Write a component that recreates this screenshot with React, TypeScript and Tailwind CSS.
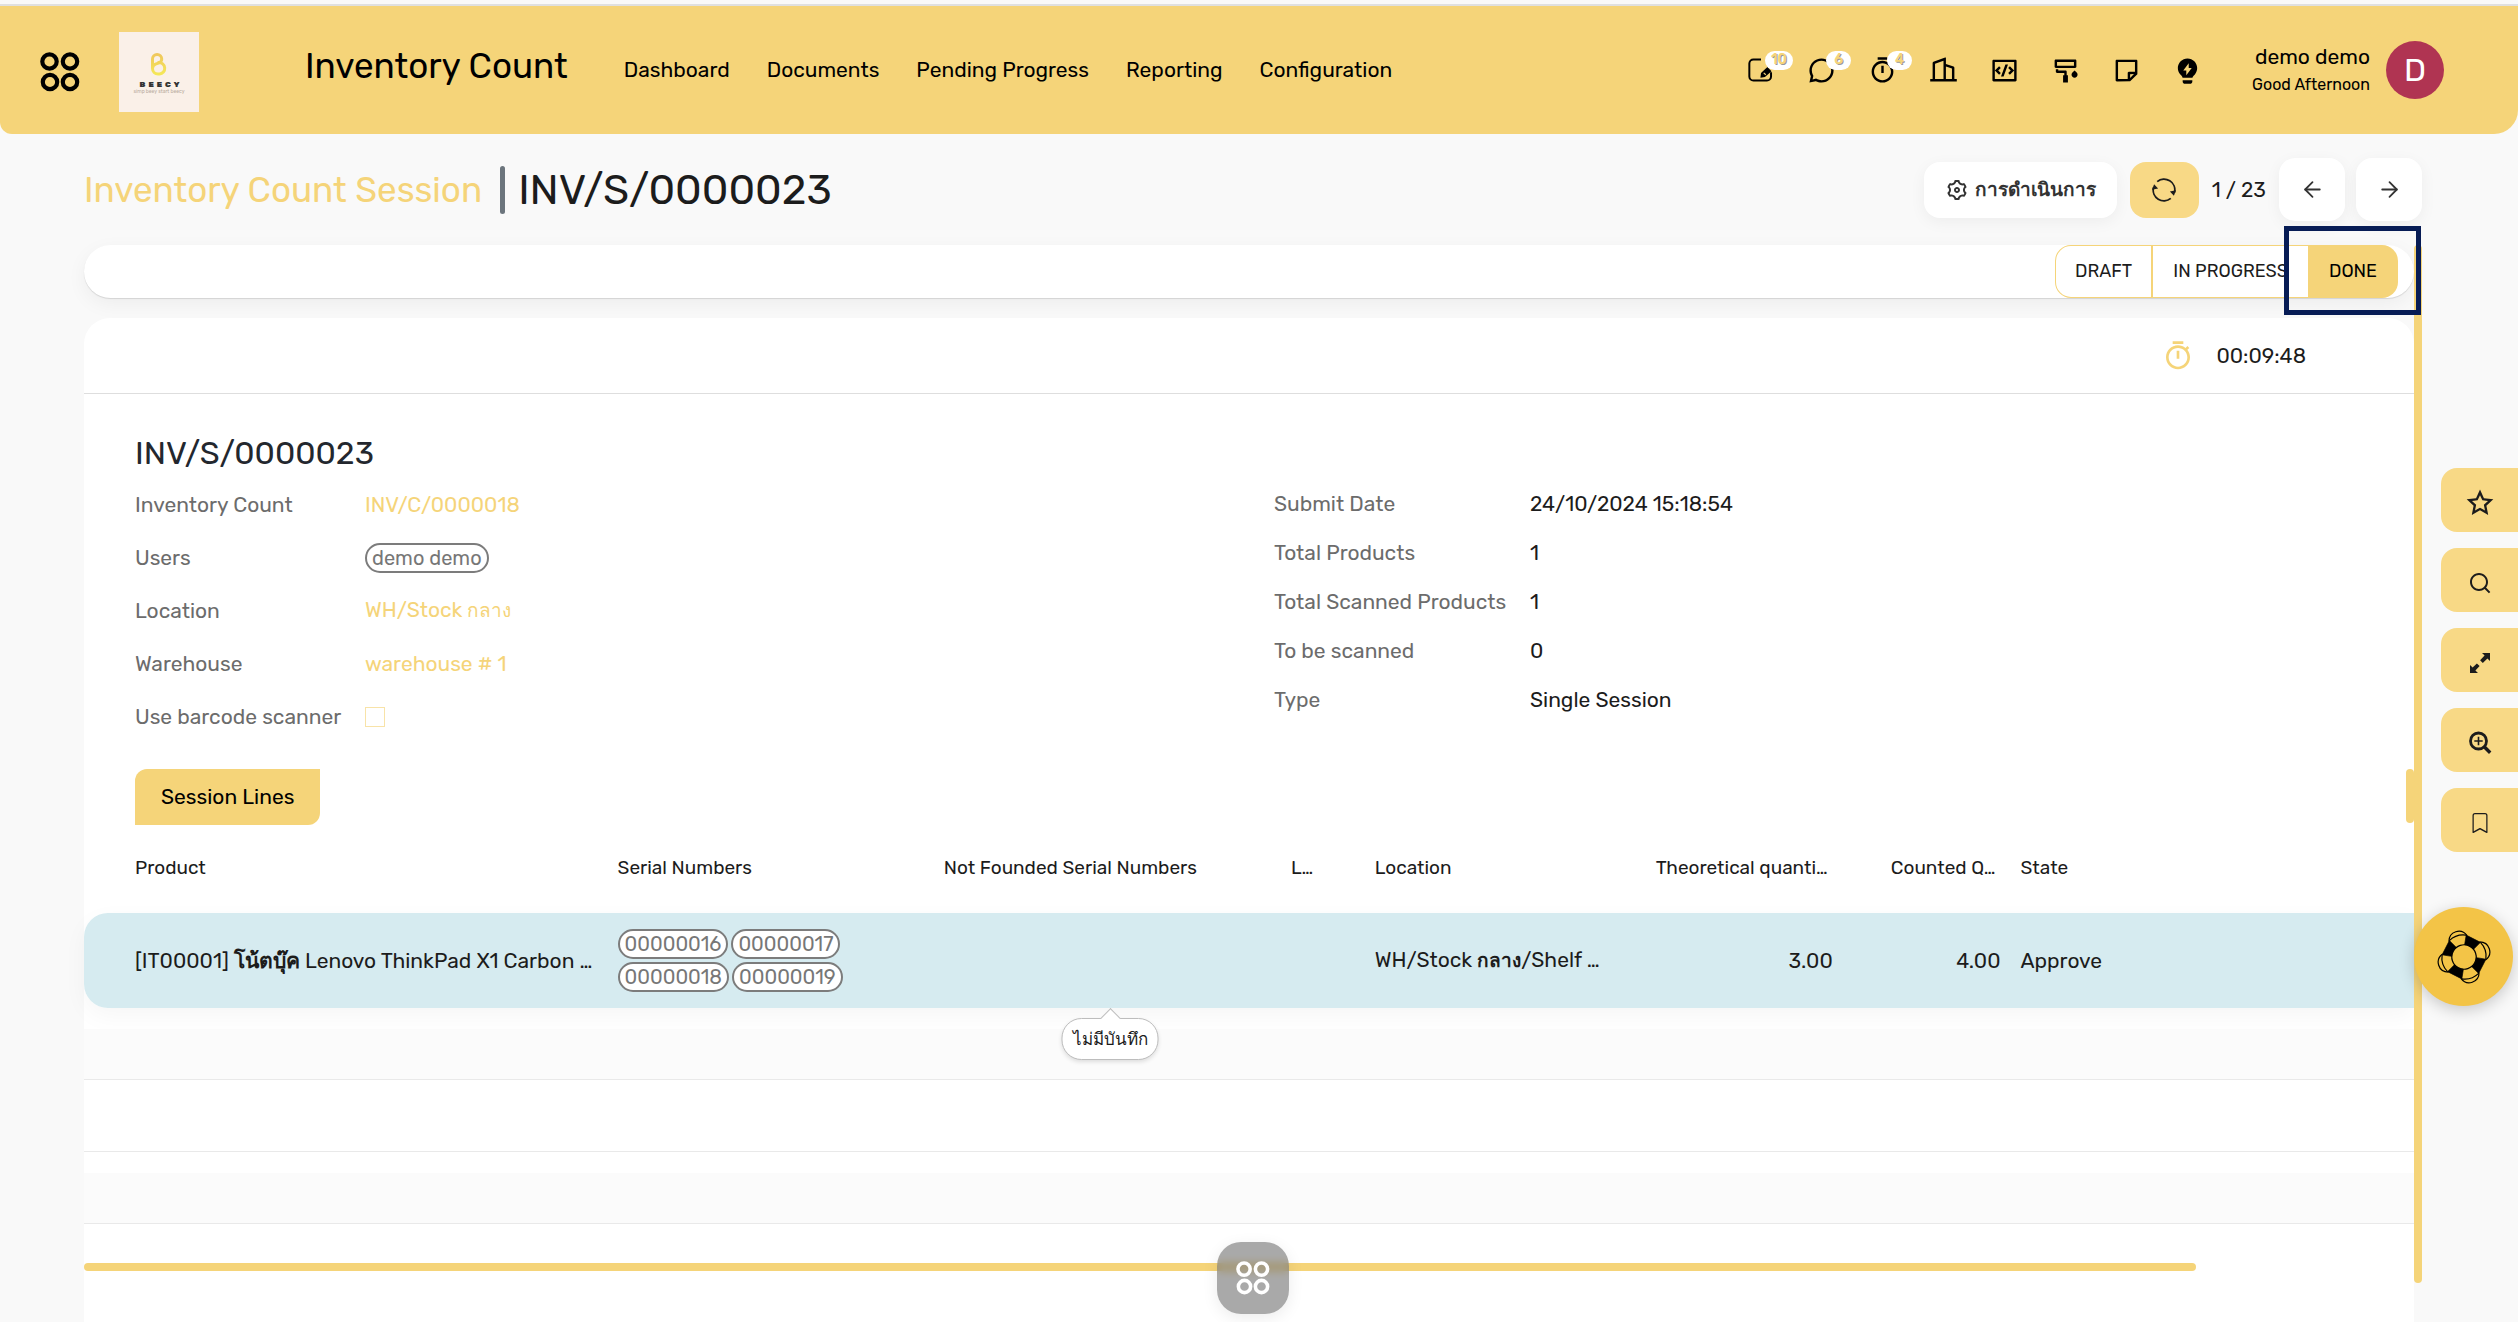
import type { ReactNode } from "react";
import {
  RiBuilding2Line,
  RiChat3Line,
  RiCodeBoxLine,
  RiLightbulbFlashFill,
  RiPaintBrushLine,
  RiSearchLine,
  RiSettings3Line,
  RiStarLine,
  RiStickyNoteLine,
  RiTimerLine,
} from "react-icons/ri";
import { BsBookmark } from "react-icons/bs";
import { ArrowLeft, ArrowRight } from "lucide-react";

const navItems = ["Dashboard", "Documents", "Pending Progress", "Reporting", "Configuration"];

function FourCircles({ className }: { className: string }) {
  return (
    <svg viewBox="0 0 40 40" className={className} fill="none" stroke="currentColor" strokeWidth="4.2" aria-hidden="true">
      <circle cx="9.5" cy="9.5" r="7.2" />
      <circle cx="30" cy="9.5" r="7.2" />
      <circle cx="10" cy="30" r="7.2" />
      <circle cx="30" cy="30" r="7.2" />
    </svg>
  );
}

function BeecyLogo() {
  return (
    <div className="flex size-20 flex-col items-center bg-[#faf0e8] pt-5">
      <svg viewBox="0 0 18 24" className="h-6 w-[18px]" fill="none" aria-hidden="true">
        <defs>
          <linearGradient id="bee" x1="0" y1="0" x2="0" y2="24" gradientUnits="userSpaceOnUse">
            <stop offset="0" stopColor="#efc45c" />
            <stop offset="1" stopColor="#f5ea58" />
          </linearGradient>
        </defs>
        <path
          d="M2.500 16.500V7a4.600 4.600 0 0 1 9.200 0q0 2.600-2.600 3.800L5.500 12.200M8.500 10.600a5.700 5.700 0 0 1 1 11.400H8A5.500 5.500 0 0 1 2.500 16.500q0-3 3-4.300"
          stroke="url(#bee)"
          strokeWidth="3"
          strokeLinecap="round"
          strokeLinejoin="round"
        />
      </svg>
      <span className="mt-1 pl-1 text-[8px] leading-[9px] font-black tracking-[3px] text-[#333]">BEECY</span>
      <span className="text-[5px] leading-[5px] text-[#b9ab9e]">simp beey start beecy</span>
    </div>
  );
}

function EditSquare() {
  return (
    <svg viewBox="0 0 24 24" className="size-7" aria-hidden="true">
      <path
        d="M12 2.900H5.500A3.500 3.500 0 0 0 2 6.400v11.100A3.500 3.500 0 0 0 5.500 21h11.600a3.500 3.500 0 0 0 3.500-3.500V14"
        fill="none"
        stroke="currentColor"
        strokeWidth="1.700"
      />
      <path d="M17.500 9.500l3.500 3.500-5.600 5-3.900.6.500-4z" fill="currentColor" />
      <path d="M14.300 14.500l1.800 1.600" stroke="#f5d479" strokeWidth="1" />
    </svg>
  );
}

function RefreshIcon() {
  return (
    <svg viewBox="0 0 24 24" className="size-6" fill="none" stroke="currentColor" strokeWidth="1.800" aria-hidden="true">
      <path d="M5.200 3.600A10.800 10.800 0 0 1 22.500 14.500" />
      <path d="M18.800 20.400A10.800 10.800 0 0 1 1.500 9.500" />
      <path d="M24 12.200l-2.100 5.600-4-4.400zM0 11.800l2.100-5.600 4 4.400z" fill="currentColor" stroke="none" />
    </svg>
  );
}

function ExpandIcon() {
  return (
    <svg viewBox="0 0 22 22" className="size-[22px]" fill="currentColor" aria-hidden="true">
      <path d="M13 1h8v8l-2.600-2.600-4.600 4.500-2.700-2.700 4.500-4.600zM9 21H1v-8l2.600 2.600 4.300-4.200 2.700 2.700-4.200 4.300z" />
    </svg>
  );
}

function ZoomIcon() {
  return (
    <svg viewBox="0 0 24 24" className="size-6" fill="none" stroke="currentColor" aria-hidden="true">
      <circle cx="10.500" cy="10" r="8" strokeWidth="2.800" />
      <path d="M16.500 16l5.700 5.700" strokeWidth="3.400" />
      <path d="M10.500 5.800v8.400M6.300 10h8.400" strokeWidth="1.600" />
    </svg>
  );
}

function LifeRing() {
  return (
    <svg viewBox="-28 -28 56 56" className="size-14" fill="none" stroke="#000" aria-hidden="true">
      <g transform="rotate(27)">
        {[0, 90, 180, 270].map((a) => (
          <g key={a} transform={`rotate(${a})`}>
            <path d="M-8-20.500L8-20.500 5-11.200A12.200 12.200 0 0 0-5-11.200Z" fill="#000" strokeWidth=".6" />
            <path d="M8-20.500A20 20 0 0 1 20.500-8" strokeWidth="1.200" />
            <path d="M7-20.500C16-25 25-16 20.500-7" strokeWidth="1.200" />
          </g>
        ))}
        <circle r="12.200" strokeWidth="1.200" />
      </g>
    </svg>
  );
}

function IconButton({ label, badge, children }: { label: string; badge?: string; children: ReactNode }) {
  return (
    <button type="button" aria-label={label} className="relative grid size-[29px] place-items-center">
      {children}
      {badge && (
        <span className="absolute -top-[5px] left-[19px] grid h-[19px] min-w-[25px] place-items-center rounded-full bg-white px-[6px] text-[14px] leading-none font-medium text-[#f5d479] [text-shadow:1px_1px_0_#999]">
          {badge}
        </span>
      )}
    </button>
  );
}

function Tag({ children }: { children: ReactNode }) {
  return (
    <span className="inline-flex h-[30px] items-center rounded-full border-2 border-[#7c7c7c] bg-white px-[5px] text-[20px] leading-none text-[#777]">
      {children}
    </span>
  );
}

function Field({ label, labelWidth, className, children }: { label: string; labelWidth: string; className: string; children: ReactNode }) {
  return (
    <div className={`flex items-center ${className}`}>
      <dt className={`${labelWidth} shrink-0 text-[#6c6c6c]`}>{label}</dt>
      <dd>{children}</dd>
    </div>
  );
}

function StripeRow({ filled }: { filled: boolean }) {
  return (
    <tr className="border-b border-[#e9e9e9]">
      <td colSpan={8} className="h-[71px] p-0">
        <div className={filled ? "mt-[21px] h-[50px] bg-[#fbfbfb]" : "h-[71px]"} />
      </td>
    </tr>
  );
}

const linkClass = "text-[#f5d479]";
const sideClass = "grid h-16 w-[77px] place-items-center rounded-l-2xl bg-[#f8d986] pt-[6px]";

export default function App() {
  return (
    <div className="flex min-h-screen flex-col bg-[#f9f9f9] font-['Rubik','Inter','Noto_Sans',sans-serif] text-[21px] leading-6 text-[#1c1c1c]">
      <div className="h-[6px] border-b-2 border-[#e0e0e0]" />
      <header className="flex h-32 items-center rounded-bl-xl rounded-br-3xl bg-[#f5d479] pr-[74px] pl-10 text-black">
        <div className="flex shrink-0 items-center gap-[39px] pt-1">
          <button type="button" aria-label="Apps">
            <FourCircles className="size-10" />
          </button>
          <BeecyLogo />
        </div>
        <h1 className="mr-14 ml-[106px] pb-2 text-[35px] leading-10 whitespace-nowrap">Inventory Count</h1>
        <nav className="flex gap-[37px] whitespace-nowrap">
          {navItems.map((item) => (
            <a key={item} href="#">{item}</a>
          ))}
        </nav>
        <div className="ml-auto flex items-center gap-8">
          <IconButton label="Edit" badge="10"><EditSquare /></IconButton>
          <IconButton label="Messages" badge="6"><RiChat3Line size={29} /></IconButton>
          <IconButton label="Activities" badge="4"><RiTimerLine size={29} /></IconButton>
          <IconButton label="Company"><RiBuilding2Line size={29} /></IconButton>
          <IconButton label="Developer"><RiCodeBoxLine size={29} /></IconButton>
          <IconButton label="Theme"><RiPaintBrushLine size={29} /></IconButton>
          <IconButton label="Notes"><RiStickyNoteLine size={29} /></IconButton>
          <IconButton label="Tips"><RiLightbulbFlashFill size={29} /></IconButton>
        </div>
        <div className="ml-[50px] pt-[2px] text-right whitespace-nowrap">
          <div className="leading-7">demo demo</div>
          <div className="text-[16px] leading-7">Good Afternoon</div>
        </div>
        <div className="ml-4 grid size-[58px] shrink-0 place-items-center rounded-full bg-[#b03452] text-[32px] text-white">D</div>
      </header>

      <div className="flex flex-1">
        <main className="relative ml-[84px] flex min-w-0 flex-1 flex-col">
          <div className="flex h-[111px] items-center justify-between">
            <div className="flex items-center whitespace-nowrap">
              <a href="#" className={`text-[35px] leading-10 ${linkClass}`}>Inventory Count Session</a>
              <span className="mr-[13px] ml-[18px] h-12 w-[5px] rounded-full bg-[#6c757d]" />
              <h2 className="text-[42px] leading-[48px]">INV/S/0000023</h2>
            </div>
            <div className="flex items-center">
              <button type="button" className="flex h-14 items-center gap-[6px] rounded-2xl bg-white px-[21px] whitespace-nowrap text-[#333] shadow-[0_4px_16px_rgba(0,0,0,0.05)]">
                <RiSettings3Line size={24} />
                <b className="text-[19px]">การดำเนินการ</b>
              </button>
              <button type="button" aria-label="Refresh" className="ml-[13px] grid h-14 w-[69px] place-items-center rounded-2xl bg-[#f8d986]">
                <RefreshIcon />
              </button>
              <span className="mx-[13px] whitespace-nowrap">1 / 23</span>
              <button type="button" aria-label="Previous" className="mr-[11px] grid h-[63px] w-[66px] place-items-center rounded-2xl bg-white text-[#333] shadow-[0_4px_16px_rgba(0,0,0,0.05)]">
                <ArrowLeft size={25} strokeWidth={1.700} />
              </button>
              <button type="button" aria-label="Next" className="grid h-[63px] w-[66px] place-items-center rounded-2xl bg-white text-[#333] shadow-[0_4px_16px_rgba(0,0,0,0.05)]">
                <ArrowRight size={25} strokeWidth={1.700} />
              </button>
            </div>
          </div>

          <div className="flex flex-1">
            <div className="flex min-w-0 flex-1 flex-col">
              <div className="flex h-[53px] items-stretch justify-end rounded-full bg-white pr-4 text-[18px] shadow-[0_1px_1px_rgba(0,0,0,0.12),0_6px_20px_rgba(0,0,0,0.05)]">
                <button type="button" className="rounded-l-2xl border border-r-2 border-[#f5d479] px-[19px] pb-[2px]">DRAFT</button>
                <button type="button" className="border-y border-[#f5d479] px-5 pb-[2px]">IN PROGRESS</button>
                <div className="relative">
                  <button type="button" className="h-full rounded-r-2xl bg-[#f5d479] px-[21px] pb-[2px] text-black">DONE</button>
                  <div className="pointer-events-none absolute -top-[19px] -right-[23px] -bottom-[17px] -left-6 border-[5px] border-[#071c55]" />
                </div>
              </div>

              <section className="mt-5 flex-1 rounded-t-[26px] bg-white">
                <div className="flex h-[76px] items-center justify-end border-b border-[#dedede] pr-[108px]">
                  <RiTimerLine size={32} className={linkClass} />
                  <span className="ml-[22px]">00:09:48</span>
                </div>

                <div className="px-[51px] pt-[39px]">
                  <h3 className="text-[32px] leading-10 text-[#23272e]">INV/S/0000023</h3>
                  <div className="grid grid-cols-2 gap-[50px]">
                    <dl className="pt-[5px]">
                      <Field label="Inventory Count" labelWidth="w-[230px]" className="h-[53px]">
                        <a href="#" className={linkClass}>INV/C/0000018</a>
                      </Field>
                      <Field label="Users" labelWidth="w-[230px]" className="h-[53px]"><Tag>demo demo</Tag></Field>
                      <Field label="Location" labelWidth="w-[230px]" className="h-[53px]">
                        <a href="#" className={linkClass}>WH/Stock <span className="text-[19px] font-medium">กลาง</span></a>
                      </Field>
                      <Field label="Warehouse" labelWidth="w-[230px]" className="h-[53px]">
                        <a href="#" className={linkClass}>warehouse # 1</a>
                      </Field>
                      <Field label="Use barcode scanner" labelWidth="w-[230px]" className="h-[53px]">
                        <input type="checkbox" aria-label="Use barcode scanner" className="block size-5 appearance-none border border-[#f8e3a8] bg-white" />
                      </Field>
                    </dl>
                    <dl className="pt-[6px]">
                      {[
                        ["Submit Date", "24/10/2024 15:18:54"],
                        ["Total Products", "1"],
                        ["Total Scanned Products", "1"],
                        ["To be scanned", "0"],
                        ["Type", "Single Session"],
                      ].map(([label, value]) => (
                        <Field key={label} label={label} labelWidth="w-64" className="h-[49px]">{value}</Field>
                      ))}
                    </dl>
                  </div>
                </div>

                <div className="mt-[26px] flex h-14 items-start justify-between pl-[51px]">
                  <button type="button" className="h-14 rounded-tl-xl rounded-br-xl bg-[#f5d479] px-[26px] text-black">Session Lines</button>
                  <div className="h-[54px] w-2 rounded-full bg-[#f5d479]" />
                </div>

                <table className="w-full table-fixed border-collapse text-left whitespace-nowrap">
                  <colgroup>
                    <col className="w-[22.6%]" />
                    <col className="w-[14%]" />
                    <col className="w-[14.9%]" />
                    <col className="w-[3.6%]" />
                    <col className="w-[12%]" />
                    <col className="w-[8.3%]" />
                    <col className="w-[7.2%]" />
                    <col />
                  </colgroup>
                  <thead>
                    <tr className="h-[88px] text-[19px] [&>th]:pb-[3px] [&>th]:font-normal">
                      <th className="pl-[51px]">Product</th>
                      <th className="px-[7px]">Serial Numbers</th>
                      <th className="px-[7px]">Not Founded Serial Numbers</th>
                      <th className="px-[7px]">L…</th>
                      <th className="px-[7px]">Location</th>
                      <th className="pr-[13px] text-right">Theoretical quanti…</th>
                      <th className="pr-[13px] text-right">Counted Q…</th>
                      <th className="px-3">State</th>
                    </tr>
                  </thead>
                  <tbody>
                    <tr className="h-[95px] rounded-l-3xl shadow-[0_8px_24px_rgba(0,0,0,0.04)] [&>td]:bg-[#d6ebf0]">
                      <td className="rounded-l-3xl pl-[51px]">[IT00001] <b>โน้ตบุ๊ค</b> Lenovo ThinkPad X1 Carbon …</td>
                      <td className="px-[7px]">
                        <div className="flex flex-wrap gap-[3px]">
                          <Tag>00000016</Tag>
                          <Tag>00000017</Tag>
                          <Tag>00000018</Tag>
                          <Tag>00000019</Tag>
                        </div>
                      </td>
                      <td className="relative">
                        <div role="tooltip" className="absolute top-full left-1/2 mt-[10px] -translate-x-1/2 rounded-[20px] border border-[#bdbdbd] bg-white px-[10px] py-2 text-[17px] font-medium shadow-[0_2px_4px_rgba(0,0,0,0.12)]">
                          <span className="absolute -top-[8px] left-1/2 -ml-[7px] size-[14px] rotate-45 border-t border-l border-[#bdbdbd] bg-white" />
                          <span className="relative">ไม่มีบันทึก</span>
                        </div>
                      </td>
                      <td />
                      <td className="px-[7px]">WH/Stock <b className="text-[19px]">กลาง</b>/Shelf …</td>
                      <td className="pr-2 text-right">3.00</td>
                      <td className="pr-2 text-right">4.00</td>
                      <td className="px-3">Approve</td>
                    </tr>
                    <StripeRow filled />
                    <StripeRow filled={false} />
                    <StripeRow filled />
                  </tbody>
                </table>
                <div className="mt-[39px] mr-[218px] h-2 rounded-full bg-[#f5d479]" />
              </section>
            </div>
            <div className="mb-[39px] w-2 rounded-full bg-[#f5d479]" />
          </div>

          <button type="button" aria-label="Quick menu" className="absolute bottom-2 left-1/2 grid size-[72px] -translate-x-1/2 place-items-center rounded-3xl bg-[#636363]/55 text-white shadow-[0_4px_16px_rgba(0,0,0,0.08)] backdrop-blur-[4px]">
            <FourCircles className="size-[34px]" />
          </button>
        </main>

        <aside className="flex w-24 shrink-0 flex-col items-end gap-4 pt-[334px]">
          <button type="button" aria-label="Favourite" className={sideClass}><RiStarLine size={28} /></button>
          <button type="button" aria-label="Search" className={sideClass}><RiSearchLine size={24} /></button>
          <button type="button" aria-label="Full screen" className={sideClass}><ExpandIcon /></button>
          <button type="button" aria-label="Zoom" className={sideClass}><ZoomIcon /></button>
          <button type="button" aria-label="Bookmark" className={sideClass}><BsBookmark size={20} /></button>
          <button type="button" aria-label="Help" className="relative mt-[39px] mr-[5px] grid size-[99px] shrink-0 place-items-center rounded-full bg-[#f3c447] shadow-[0_4px_16px_rgba(0,0,0,0.2)]">
            <LifeRing />
          </button>
        </aside>
      </div>
    </div>
  );
}
